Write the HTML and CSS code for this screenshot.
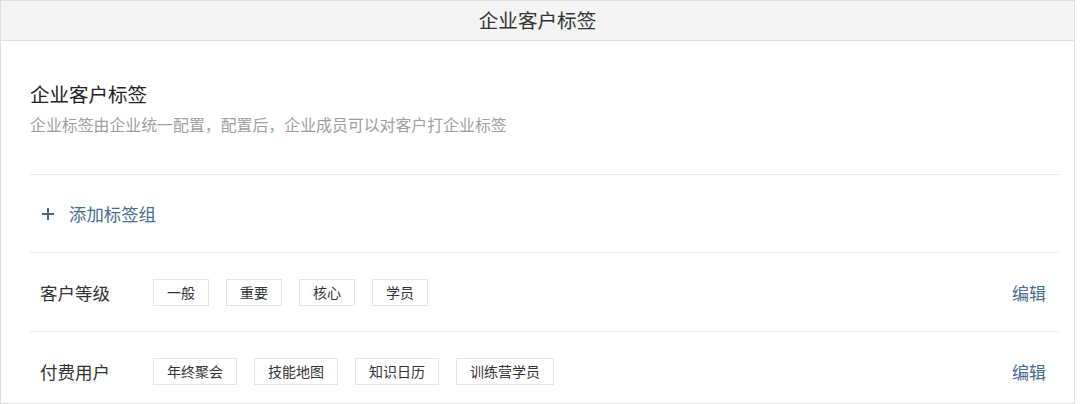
FILE: index.html
```html
<!DOCTYPE html>
<html lang="zh">
<head>
<meta charset="utf-8">
<link rel="stylesheet" href="styles.css">
</head>
<body>
<div class="panel">
  <div class="header">企业客户标签</div>
  <div class="content">
    <div class="intro">
      <div class="title">企业客户标签</div>
      <div class="desc">企业标签由企业统一配置，配置后，企业成员可以对客户打企业标签</div>
    </div>
    <div class="add-row">
      <svg class="plus" width="12" height="12" viewBox="0 0 12 12"><path d="M6 0V12M0 6H12" stroke="#4a6b8e" stroke-width="2"/></svg>
      <span>添加标签组</span>
    </div>
    <div class="group">
      <div class="label">客户等级</div>
      <div class="tags">
        <span class="tag">一般</span><span class="tag">重要</span><span class="tag">核心</span><span class="tag">学员</span>
      </div>
      <a class="edit">编辑</a>
    </div>
    <div class="group">
      <div class="label">付费用户</div>
      <div class="tags">
        <span class="tag">年终聚会</span><span class="tag">技能地图</span><span class="tag">知识日历</span><span class="tag">训练营学员</span>
      </div>
      <a class="edit">编辑</a>
    </div>
  </div>
</div>
</body>
</html>
```
FILE: styles.css
```css
html, body { margin: 0; padding: 0; background: #fff; }
body { font-family: "Noto Sans CJK SC", "Microsoft YaHei", sans-serif; color: #333; }
.panel {
  width: 1073px;
  height: 402px;
  border: 1px solid #dcdcdc;
  overflow: hidden;
}
.header {
  height: 39px;
  line-height: 38px;
  background: #f4f4f4;
  border-bottom: 1px solid #dedede;
  text-align: center;
  font-size: 19.6px;
  color: #333;
}
.content { padding: 0 15px 0 29px; }
.intro { padding: 39px 0 38px; }
.title { font-size: 19.5px; line-height: 28px; color: #222; }
.desc { margin-top: 6px; font-size: 15.9px; line-height: 22px; color: #9e9e9e; }
.add-row {
  border-top: 1px solid #e8e8e8;
  height: 77px;
  display: flex;
  align-items: center;
  padding-left: 12px;
  gap: 15px;
  font-size: 17.4px;
  color: #4a6b8e;
}
.group {
  border-top: 1px solid #e8e8e8;
  height: 78px;
  display: flex;
  align-items: center;
  padding: 0 13px 0 10px;
}
.label { width: 113px; font-size: 17.5px; color: #333; }
.tags { flex: 1; display: flex; gap: 17px; }
.tag {
  height: 25px;
  line-height: 25px;
  padding: 0 13px;
  border: 1px solid #e3e3e3;
  font-size: 14px;
  color: #333;
}
.edit { font-size: 17px; color: #4a6b8e; }
```
